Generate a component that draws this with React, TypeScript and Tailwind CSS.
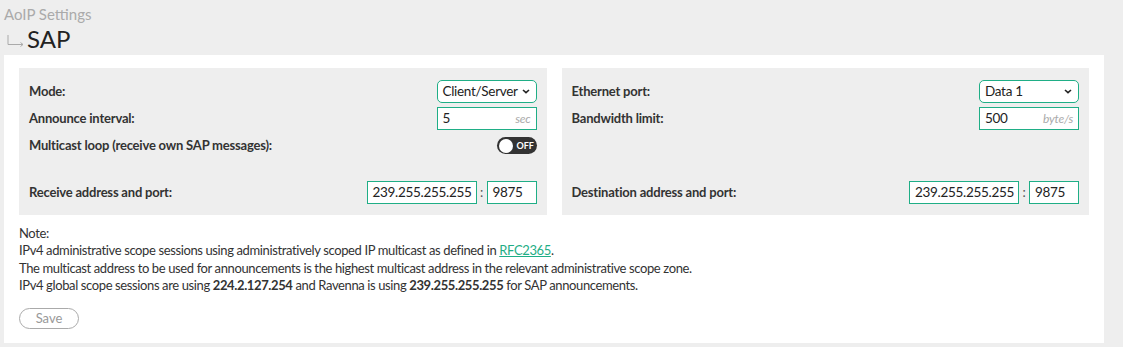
import React from 'react';

const Select = ({ value }: { value: string }) => (
  <div className="flex h-[23px] w-[100px] items-center justify-between rounded-[5px] border border-[#1fae86] bg-white pl-[5px] pr-[6px] text-[13.5px] tracking-[-0.3px] text-[#222]">
    <span>{value}</span>
    <svg width="8" height="5" viewBox="0 0 8 5">
      <path d="M1 1l3 2.6L7 1" fill="none" stroke="#222" strokeWidth="1.6" />
    </svg>
  </div>
);

const UnitInput = ({ value, unit }: { value: string; unit: string }) => (
  <div className="flex h-[23px] w-[100px] items-center justify-between border border-[#1fae86] bg-white px-[5px]">
    <span className="text-[13.5px] tracking-[-0.3px] text-[#222]">{value}</span>
    <span className="text-[12px] italic tracking-[-0.2px] text-[#aaa]">{unit}</span>
  </div>
);

const AddressPort = ({ address, port }: { address: string; port: string }) => (
  <div className="flex items-center">
    <div className="flex h-[23px] w-[110px] items-center border border-[#1fae86] bg-white px-[5px] text-[13.5px] tracking-[-0.3px] text-[#222]">
      {address}
    </div>
    <span className="w-[10px] text-center text-[13px] text-[#555]">:</span>
    <div className="flex h-[23px] w-[50px] items-center border border-[#1fae86] bg-white px-[5px] text-[13.5px] tracking-[-0.3px] text-[#222]">
      {port}
    </div>
  </div>
);

const Row = ({ label, children, className = '' }: { label?: string; children?: React.ReactNode; className?: string }) => (
  <div className={`flex h-[23px] items-center justify-between ${className}`}>
    <span className="text-[13px] font-bold tracking-[-0.2px] text-[#333]">{label}</span>
    {children}
  </div>
);

const Toggle = () => (
  <div className="flex h-[17px] w-[40px] items-center rounded-full bg-[#333] pl-[2px]">
    <span className="h-[14px] w-[14px] rounded-full bg-white" />
    <span className="ml-[4px] text-[9px] font-bold text-white">OFF</span>
  </div>
);

export default function App() {
  return (
    <div className="min-h-screen bg-[#eeeeee] font-['Lato',sans-serif] text-[#333]">
      <div className="pl-[4px] pt-[4px]">
        <div className="text-[15px] leading-[20px] text-[#aaa]">AoIP Settings</div>
        <div className="flex items-end">
          <svg width="18" height="12" viewBox="0 0 18 12" className="ml-[3px] mb-[7px]">
            <path d="M1 0v9.5h15M13.5 7.5l2.5 2-2.5 2" fill="none" stroke="#aaa" strokeWidth="1" />
          </svg>
          <span className="ml-[2px] text-[24px] leading-[30px] text-[#222]">SAP</span>
        </div>
      </div>

      <div className="ml-[4px] mt-[1px] w-[1100px] bg-white px-[15px] pb-[14px] pt-[13px]">
        <div className="grid grid-cols-2 gap-[15px]">
          <div className="flex flex-col gap-[4px] bg-[#eeeeee] px-[10px] pb-[11px] pt-[12px]">
            <Row label="Mode:">
              <Select value="Client/Server" />
            </Row>
            <Row label="Announce interval:">
              <UnitInput value="5" unit="sec" />
            </Row>
            <Row label="Multicast loop (receive own SAP messages):">
              <Toggle />
            </Row>
            <Row label="Receive address and port:" className="mt-[20px]">
              <AddressPort address="239.255.255.255" port="9875" />
            </Row>
          </div>
          <div className="flex flex-col gap-[4px] bg-[#eeeeee] px-[10px] pb-[11px] pt-[12px]">
            <Row label="Ethernet port:">
              <Select value="Data 1" />
            </Row>
            <Row label="Bandwidth limit:">
              <UnitInput value="500" unit="byte/s" />
            </Row>
            <Row />
            <Row label="Destination address and port:" className="mt-[20px]">
              <AddressPort address="239.255.255.255" port="9875" />
            </Row>
          </div>
        </div>

        <div className="mt-[10px] text-[13px] leading-[17.3px] tracking-[-0.38px] text-[#333]">
          <p>Note:</p>
          <p>
            IPv4 administrative scope sessions using administratively scoped IP multicast as defined in{' '}
            <a href="#" className="text-[#1fae86] underline">RFC2365</a>.
          </p>
          <p>The multicast address to be used for announcements is the highest multicast address in the relevant administrative scope zone.</p>
          <p>
            IPv4 global scope sessions are using <b>224.2.127.254</b> and Ravenna is using <b>239.255.255.255</b> for SAP announcements.
          </p>
        </div>

        <button className="mt-[14px] h-[21px] w-[60px] rounded-full border border-[#aaa] bg-white text-[13px] leading-[19px] text-[#999]">
          Save
        </button>
      </div>
    </div>
  );
}
